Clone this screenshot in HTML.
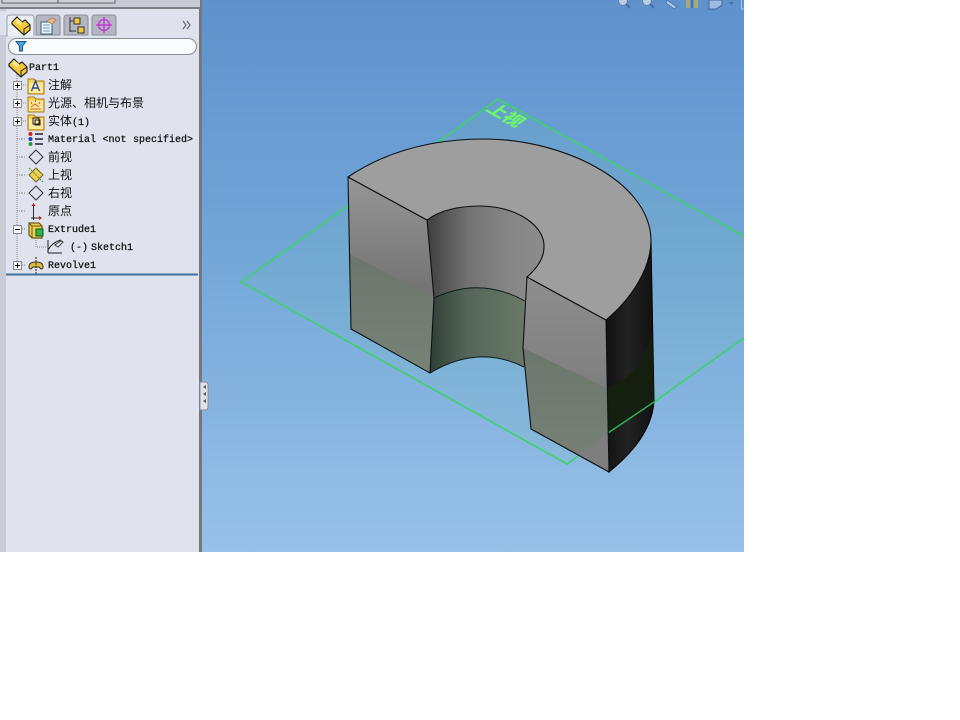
<!DOCTYPE html>
<html><head><meta charset="utf-8"><style>
html,body{margin:0;padding:0;background:#fff;width:960px;height:720px;overflow:hidden}
#a{position:absolute;left:0;top:0;width:744px;height:552px;overflow:hidden}
svg{position:absolute;left:0;top:0}
.t{position:absolute;color:#111;white-space:nowrap;line-height:14px}
.m{font:10px/14px "Liberation Mono",monospace;color:#111;-webkit-text-stroke:.25px #111}
.c{font:12px/14px "WenQuanYi Zen Hei","Noto Sans CJK SC",sans-serif}
</style></head><body>
<div id="a">
<svg width="744" height="552" viewBox="0 0 744 552">
<defs>
<linearGradient id="bg" x1="0" y1="0" x2="0" y2="1"><stop offset="0" stop-color="#5f92cd"/><stop offset=".45" stop-color="#72a6d8"/><stop offset="1" stop-color="#98c1e8"/></linearGradient>
<linearGradient id="lf" x1="0" y1="0" x2="0" y2="1"><stop offset="0" stop-color="#969696"/><stop offset=".55" stop-color="#757575"/><stop offset="1" stop-color="#707070"/></linearGradient>
<linearGradient id="rf" x1="0" y1="0" x2="0" y2="1"><stop offset="0" stop-color="#8e8e8e"/><stop offset="1" stop-color="#737373"/></linearGradient>
<linearGradient id="lt" x1="0" y1="0" x2="0" y2="1"><stop offset="0" stop-color="#6b756a"/><stop offset="1" stop-color="#788378"/></linearGradient>
<linearGradient id="rt" x1="0" y1="0" x2="0" y2="1"><stop offset="0" stop-color="#6c766b"/><stop offset="1" stop-color="#768076"/></linearGradient>
<linearGradient id="h" x1="0" y1="0" x2="1" y2="0"><stop offset="0" stop-color="#3e3e3e"/><stop offset=".35" stop-color="#727272"/><stop offset=".7" stop-color="#868686"/><stop offset="1" stop-color="#8c8c8c"/></linearGradient>
<linearGradient id="ht" x1="0" y1="0" x2="1" y2="0"><stop offset="0" stop-color="#2f3f35"/><stop offset=".4" stop-color="#55665a"/><stop offset="1" stop-color="#6a7866"/></linearGradient>
<linearGradient id="d" x1="0" y1="0" x2="1" y2="0"><stop offset="0" stop-color="#121212"/><stop offset=".45" stop-color="#222"/><stop offset="1" stop-color="#111"/></linearGradient>
<g id="part"><path d="M1 6 6 1 11 6 14 4 19 9 19 14 13 19 1 8Z" fill="#f2c83a" stroke="#222" stroke-width="1.2"/><path d="M6 2 11 6 10 10 4 6Z" fill="#fbe88a"/><path d="M13 19 13 13 19 9" fill="none" stroke="#222"/></g>
<g id="fold"><path d="M1 3h6l2 2h8v13H1Z" fill="#f7d25c" stroke="#a97a18"/><path d="M2 7h14v10H2Z" fill="#fde89b"/></g>
<g id="plus"><rect x=".5" y=".5" width="8" height="8" fill="#f4f4f4" stroke="#8a8a8a"/><path d="M2 4.500h5M4.500 2v5" stroke="#111"/></g>
<g id="minus"><rect x=".5" y=".5" width="8" height="8" fill="#f4f4f4" stroke="#8a8a8a"/><path d="M2 4.500h5" stroke="#111"/></g>
<path id="dia" d="M0 -7 7 0 0 7 -7 0Z" fill="none" stroke="#333"/>
</defs>

<rect width="744" height="552" fill="url(#bg)"/>
<rect x="200" width="2" height="552" fill="#787a82"/>

<!-- plane -->
<path d="M241 282 498 99 824 281 567 464Z" fill="#6fc39a" fill-opacity=".1" stroke="#3bd36a" stroke-width="1.600"/>
<text transform="matrix(.87 .49 -.81 .58 485 110)" font-family="'Noto Sans CJK SC',sans-serif" font-size="18" font-weight="bold" fill="#6cf56c" stroke="#6cf56c" stroke-width=".4">上视</text>

<!-- dark side -->
<path d="M651 240 654 400C653 430 630 455 609 472L606 320C630 300 651 270 651 240Z" fill="url(#d)" stroke="#000" stroke-width="1"/>
<path d="M607 388C628 382 645 360 652 332L654 402 608 433Z" fill="#141f10"/>
<path d="M654 402 608 433" stroke="#2fb455" stroke-width="1.400"/>

<!-- hole wall -->
<path d="M427 220C440 210 460 206 480 206C515 206 545 225 544 247C544 260 535 270 527 277L525 301Q480 276 434 298Z" fill="url(#h)"/>
<path d="M434 298Q480 276 525 301L524 367Q478 344 430 373Z" fill="url(#ht)"/>
<path d="M434 298Q480 276 525 301" fill="none" stroke="#0d1a1a" stroke-width="1"/>
<path d="M430 373Q478 344 524 367" fill="none" stroke="#0d1a1a" stroke-width="1"/>

<!-- left block -->
<path d="M348 177 427 220 434 298 430 373 351 329Z" fill="url(#lf)"/>
<path d="M350 254 434 298 430 373 351 329Z" fill="url(#lt)"/>
<path d="M348 177 427 220 434 298 430 373 351 329Z" fill="none" stroke="#0a1214" stroke-width="1.100"/>

<!-- right block -->
<path d="M527 277 606 320 609 472 531 429 523 348Z" fill="url(#rf)"/>
<path d="M523 348 607 388 608 433 578 455 531 429Z" fill="url(#rt)"/>
<path d="M578 455 609 472 608 433Z" fill="#7e7e7e"/>
<path d="M527 277 606 320 609 472 531 429 523 348Z" fill="none" stroke="#0a1214" stroke-width="1.100"/>

<!-- top face -->
<path d="M348 177C385 152 430 139 485 139C560 139 650 180 651 240C651 270 630 300 606 320L527 277C535 270 544 260 544 247C545 225 515 206 480 206C460 206 440 210 427 220Z" fill="#9e9e9e" stroke="#0a0f14" stroke-width="1.100" stroke-linejoin="round"/>

<!-- top-right toolbar icons -->
<g opacity=".7">
<circle cx="623" cy="1" r="4.500" fill="#dfe6ee" stroke="#6a7a90"/><path d="M626 4l4 4" stroke="#3a5f9a" stroke-width="2"/>
<circle cx="647" cy="1" r="4.500" fill="#dfe6ee" stroke="#6a7a90"/><path d="M650 4l4 4" stroke="#3a5f9a" stroke-width="2"/>
<path d="M667 0 677 7 674 9 666 3Z" fill="#cfe0f5" stroke="#4a6a9a"/>
<rect x="686" y="0" width="4" height="8" fill="#c9b24a"/><rect x="691" y="0" width="2" height="8" fill="#3c6aa0"/><rect x="694" y="0" width="4" height="8" fill="#c9b24a"/>
<path d="M709 0H722V5L716 9H709Z" fill="#b9cdec" stroke="#35568c"/><path d="M729 2h5l-2.500 3Z" fill="#3f5c8c"/>
<rect x="741.500" y="-2" width="4" height="11" fill="none" stroke="#c4d3e8"/>
</g>

<!-- sidebar -->
<rect x="0" y="0" width="199" height="552" fill="#e0e3ed"/>
<rect x="0" y="0" width="6" height="552" fill="#c9ccd6"/>
<rect x="199" width="2" height="552" fill="#74767e"/>
<rect x="0" y="0" width="200" height="9" fill="#c8cad2"/>
<rect x="0" y="7" width="200" height="2" fill="#7d7f86"/>
<rect x="2" y="-2" width="113" height="5" fill="#d0d1d6" stroke="#66676c"/>
<path d="M58 0v3" stroke="#555"/>
<rect x="6" y="9" width="193" height="5" fill="#e0e3ec"/>
<!-- tabs -->
<rect x="0" y="11" width="199" height="24" fill="#dfe2ec"/>
<path d="M36 35V18q0-3 3-3h18q3 0 3 3V35Z" fill="#b4b7c2" stroke="#8a8c95"/>
<path d="M64 35V18q0-3 3-3h18q3 0 3 3V35Z" fill="#b4b7c2" stroke="#8a8c95"/>
<path d="M92 35V18q0-3 3-3h18q3 0 3 3V35Z" fill="#b4b7c2" stroke="#8a8c95"/>
<path d="M6 36h1V18q0-3 3-3h21q3 0 3 3v18" fill="#eceef5" stroke="#9a9ca6"/>
<use href="#part" x="11" y="16"/>
<path d="M41 22h11v12H41Z" fill="#eef6ff" stroke="#2a5f8c"/><path d="M43 25h7M43 28h7M43 31h7" stroke="#5f95c8"/><path d="M47 21l5-3 4 2-4 4Z" fill="#eebb88" stroke="#a86"/>
<path d="M70 17v15M70 21h6M70 31h6" stroke="#333" fill="none"/><rect x="74" y="18" width="6" height="6" fill="#f2c83a" stroke="#333"/><rect x="78" y="27" width="6" height="6" fill="#f2c83a" stroke="#333"/>
<circle cx="104" cy="25" r="5.500" fill="none" stroke="#c040d8" stroke-width="1.500"/><path d="M104 17v16M96 25h16" stroke="#c040d8" stroke-width="1.500"/>
<path d="M183 21l3 4-3 4M187 21l3 4-3 4" fill="none" stroke="#666" stroke-width="1.200"/>
<!-- search -->
<rect x="8.500" y="38.500" width="188" height="16" rx="8" fill="#fafbfd" stroke="#8a8c94"/>
<path d="M16 41.500H26L22.500 46V51H19.500V46Z" fill="#46a8e0" stroke="#1d4f86"/>
<!-- tree lines -->
<path d="M17 74V266M17 85h9M17 103h9M17 121h9M22 139h4M22 157h4M22 175h4M22 193h4M22 211h4M36 238v9h10M22 229h4M22 265h4M22 139h-5M22 157h-5M22 175h-5M22 193h-5M22 211h-5" stroke="#8a8a8a" stroke-dasharray="1 1" fill="none"/>
<use href="#part" x="8" y="58"/>
<use href="#plus" x="13" y="81"/><use href="#plus" x="13" y="99"/><use href="#plus" x="13" y="117"/>
<use href="#minus" x="13" y="225"/><use href="#plus" x="13" y="261"/>
<use href="#fold" x="27" y="76"/><path d="M31.500 91 35.500 81 39.500 91M33 88h5" stroke="#2a4fa0" stroke-width="1.400" fill="none"/>
<use href="#fold" x="27" y="94"/><path d="M30 109h11M31 107l4-3 4 3M35.500 100v2M31 102l1 2M40 102l-1 2" stroke="#c9621a" fill="none"/>
<use href="#fold" x="27" y="112"/><rect x="33" y="118" width="6" height="6" fill="none" stroke="#222"/><rect x="35" y="120" width="5" height="5" fill="none" stroke="#222"/>
<!-- material -->
<circle cx="30.500" cy="134" r="2" fill="#d42020"/><circle cx="30.500" cy="139" r="2" fill="#2040c0"/><circle cx="30.500" cy="144" r="2" fill="#20a040"/>
<path d="M35 134h8M35 139h8M35 144h8" stroke="#223" stroke-width="1.600"/>
<use href="#dia" x="36" y="157"/>
<path d="M36 168 43 175 36 182 29 175Z" fill="#f1d04a" stroke="#6a6a30"/><path d="M29 168 43 182" stroke="#5a8a3a" stroke-dasharray="2 1"/>
<use href="#dia" x="36" y="193"/>
<path d="M33.500 204v14h7" fill="none" stroke="#333"/><path d="M33.500 203l-2 3h4Z" fill="#c01818"/><path d="M42 218l-3-2v4Z" fill="#c01818"/><path d="M31 218h5M33.500 216v4" stroke="#223"/>
<!-- extrude -->
<path d="M29 223h10l3 3v12H32l-3-3Z" fill="#f2cf50" stroke="#6a5a18" stroke-width="1.200"/><path d="M32 226h10M32 226v12M29 223l3 3" stroke="#6a5a18" fill="none"/>
<rect x="36" y="229" width="7" height="7" fill="#2fb54a" stroke="#0a5a20"/>
<!-- sketch -->
<path d="M48 240V253M48 253H62M48 250c4-7 9-9 13-10" stroke="#222" fill="none"/><path d="M55 245l6-4 2 1-5 5Z" fill="#fff" stroke="#333"/>
<!-- revolve -->
<path d="M29 267q0-5 7-5t7 5q0 2-2 2l-2-2h-6l-2 2q-2 0-2-2Z" fill="#e0bc3a" stroke="#333"/><path d="M36 257v17" stroke="#222" stroke-dasharray="2 1"/>
<rect x="6" y="273.500" width="192" height="2" fill="#3f6f9f"/>
<!-- grip -->
<path d="M200 382h5q3 0 3 3v22q0 3-3 3h-5Z" fill="#e0e3ec" stroke="#8a8c95"/>
<path d="M206 385l-3 2 3 2ZM206 392l-3 2 3 2ZM206 399l-3 2 3 2Z" fill="#555"/>
</svg>

<div class="t m" style="left:29px;top:62px">Part1</div>
<div class="t c" style="left:48px;top:78px">注解</div>
<div class="t c" style="left:48px;top:96px">光源、相机与布景</div>
<div class="t c" style="left:48px;top:114px">实体<span class="m">(1)</span></div>
<div class="t m" style="left:48px;top:134px;word-spacing:.5px">Material &lt;not specified&gt;</div>
<div class="t c" style="left:48px;top:150px">前视</div>
<div class="t c" style="left:48px;top:168px">上视</div>
<div class="t c" style="left:48px;top:186px">右视</div>
<div class="t c" style="left:48px;top:204px">原点</div>
<div class="t m" style="left:48px;top:224px">Extrude1</div>
<div class="t m" style="left:70px;top:242px;word-spacing:-3px">(-) Sketch1</div>
<div class="t m" style="left:48px;top:260px">Revolve1</div>
</div>
</body></html>
